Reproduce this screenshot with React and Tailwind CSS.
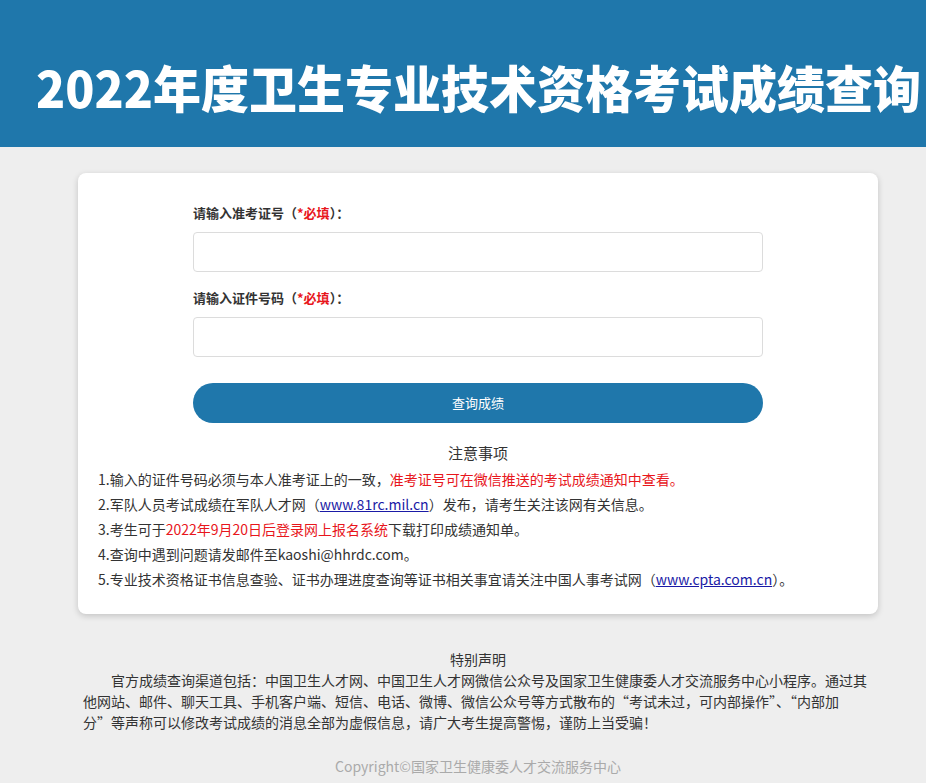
import React from "react";

const notes = [
  <>
    1.输入的证件号码必须与本人准考证上的一致，
    <span className="text-[#e8161c]">准考证号可在微信推送的考试成绩通知中查看。</span>
  </>,
  <>
    2.军队人员考试成绩在军队人才网（
    <a href="#" className="text-[#1a1aa6] underline">www.81rc.mil.cn</a>
    ）发布，请考生关注该网有关信息。
  </>,
  <>
    3.考生可于<span className="text-[#e8161c]">2022年9月20日后登录网上报名系统</span>下载打印成绩通知单。
  </>,
  <>4.查询中遇到问题请发邮件至kaoshi@hhrdc.com。</>,
  <>
    5.专业技术资格证书信息查验、证书办理进度查询等证书相关事宜请关注中国人事考试网（
    <a href="#" className="text-[#1a1aa6] underline">www.cpta.com.cn</a>
    ）。
  </>,
];

const Field = ({ label, className }) => (
  <div className={className}>
    <label className="block text-[13px] font-bold leading-5 text-[#333]">
      {label}（<span className="text-[#e8161c]">*必填</span>）：
    </label>
    <input
      type="text"
      className="mt-[9px] block h-[40px] w-full rounded-[4px] border border-[#dcdcdc] bg-white px-3 outline-none"
    />
  </div>
);

export default function App() {
  return (
    <div
      className="min-h-[783px] bg-[#eeeeee] text-[#333]"
      style={{ fontFamily: '"Noto Sans CJK SC", "Noto Sans", "Liberation Sans", sans-serif' }}
    >
      <header className="flex h-[147px] items-center overflow-hidden bg-[#1f77ab] pl-[36px] pt-[25px]">
        <h1 className="origin-left scale-x-[0.96] whitespace-nowrap text-[50px] font-extrabold leading-none text-white">
          2022年度卫生专业技术资格考试成绩查询
        </h1>
      </header>

      <main className="ml-[78px] mt-[26px] w-[800px] rounded-lg bg-white pb-[22px] pt-[30px] shadow-[0_2px_6px_rgba(0,0,0,0.18)]">
        <div className="mx-auto w-[570px]">
          <Field label="请输入准考证号" />
          <Field label="请输入证件号码" className="mt-[16px]" />
          <button className="mt-[26px] h-[40px] w-full rounded-full bg-[#1f77ab] text-[13px] text-white">
            查询成绩
          </button>
        </div>

        <h2 className="mt-[18px] text-center text-[15px] leading-6 text-[#333]">注意事项</h2>
        <ul className="mt-[2px] pl-[20px] text-[14px] leading-[25px] text-[#333]">
          {notes.map((n, i) => (
            <li key={i}>{n}</li>
          ))}
        </ul>
      </main>

      <footer className="ml-[78px] w-[800px] px-[5px] pt-[35px] text-[14px] text-[#333]">
        <p className="text-center leading-[21px]">特别声明</p>
        <p className="indent-[2em] leading-[21px]">
          官方成绩查询渠道包括：中国卫生人才网、中国卫生人才网微信公众号及国家卫生健康委人才交流服务中心小程序。通过其他网站、邮件、聊天工具、手机客户端、短信、电话、微博、微信公众号等方式散布的“考试未过，可内部操作”、“内部加分”等声称可以修改考试成绩的消息全部为虚假信息，请广大考生提高警惕，谨防上当受骗！
        </p>
        <p className="mt-[21px] pb-[2px] text-center leading-6 text-[#aaaaaa]">
          Copyright©国家卫生健康委人才交流服务中心
        </p>
      </footer>
    </div>
  );
}
